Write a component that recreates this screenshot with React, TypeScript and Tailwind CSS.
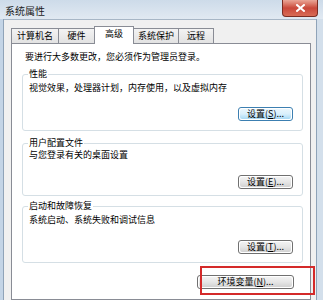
import React from "react";

const FONT = { fontFamily: '"Noto Sans CJK SC", "Noto Sans", sans-serif' };

function Btn({ label, k, w, def }: { label: string; k: string; w: string; def?: boolean }) {
  return (
    <div
      className={`${w} h-[14px] rounded-[3px] border ${
        def ? "border-[#3c7fb1]" : "border-[#707070]"
      } p-px bg-white flex`}
    >
      <div
        className={`flex-1 rounded-[2px] flex items-center justify-center text-[9px] leading-[10px] text-black ${
          def
            ? "bg-gradient-to-b from-[#eaf6fd] via-[#d9f0fc] to-[#a7d9f5]"
            : "bg-gradient-to-b from-[#f2f2f2] via-[#e6e6e6] to-[#d2d2d2]"
        }`}
      >
        <span>
          {label}(<span className="underline">{k}</span>)...
        </span>
      </div>
    </div>
  );
}

function Group({
  title,
  desc,
  k,
  def,
  mt,
  pt,
  bmt,
  pb,
}: {
  title: string;
  desc: string;
  k: string;
  def?: boolean;
  mt: string;
  pt: string;
  bmt: string;
  pb: string;
}) {
  return (
    <fieldset
      className={`${mt} ${pt} ${pb} border border-[#d5dfe5] rounded-[3px] pl-[6px] pr-[9px] flex flex-col`}
    >
      <legend className="px-[1px] -ml-[1px] text-[9px] leading-[12px] text-black">{title}</legend>
      <div className="text-[9px] leading-[12px] text-black">{desc}</div>
      <div className={`${bmt} flex justify-end`}>
        <Btn label="设置" k={k} w="w-[55px]" def={def} />
      </div>
    </fieldset>
  );
}

function Tab({ label, w, sel }: { label: string; w: string; sel?: boolean }) {
  if (sel)
    return (
      <div
        className={`${w} h-[18px] -mb-px -ml-px relative z-10 bg-white border-t border-l border-r border-[#898c95] flex items-start justify-center pt-[1px] text-[9px] leading-[12px] text-black`}
      >
        {label}
      </div>
    );
  return (
    <div
      className={`${w} h-[15px] -ml-px first:ml-0 bg-gradient-to-b from-[#f3f3f3] to-[#e2e2e2] border-t border-l border-r border-[#898c95] flex items-center justify-center text-[9px] leading-[12px] text-black`}
    >
      {label}
    </div>
  );
}

export default function App() {
  return (
    <div className="w-[323px] h-[300px] overflow-hidden relative flex flex-col bg-[#d6e2ee]" style={FONT}>
      {/* title bar */}
      <div className="h-[19px] shrink-0 flex bg-gradient-to-b from-[#cddbe9] to-[#e1e9f2]">
        <span className="ml-[5px] mt-[5px] text-[10px] leading-[12px] text-[#1b1b1b]">系统属性</span>
        <div className="ml-auto mr-[5px] w-[36px] h-[17px] rounded-b-[4px] border border-t-0 border-[#7a2c22] bg-gradient-to-b from-[#e9a596] via-[#c9473a] to-[#d86b55] flex items-center justify-center">
          <svg width="9" height="8" viewBox="0 0 9 8">
            <path d="M1 1 L8 7 M8 1 L1 7" stroke="#fff" strokeWidth="2" strokeLinecap="square" />
          </svg>
        </div>
      </div>
      {/* body */}
      <div className="flex-1 flex">
        <div className="w-[4px] shrink-0 bg-[#c3d4e6] border-r border-[#8fa3b8]" />
        <div className="flex-1 bg-[#f0f0f0] border-t border-[#a7b6c6] pl-[7px] pr-[5px] pt-[6px] flex flex-col">
          {/* tabs */}
          <div className="flex items-end h-[17px] shrink-0">
            <Tab label="计算机名" w="w-[48px]" />
            <Tab label="硬件" w="w-[37px]" />
            <Tab label="高级" w="w-[40px]" sel />
            <Tab label="系统保护" w="w-[46px]" />
            <Tab label="远程" w="w-[36px]" />
          </div>
          {/* panel */}
          <div className="flex-1 bg-white border border-[#898c95] pt-[7px] pl-[10px] pr-[7px] flex flex-col">
            <div className="ml-[3px] text-[9px] leading-[12px] text-black">
              要进行大多数更改，您必须作为管理员登录。
            </div>
            <Group
              title="性能"
              desc="视觉效果，处理器计划，内存使用，以及虚拟内存"
              k="S"
              def
              mt="mt-[5px]"
              pt="pt-[2px]"
              bmt="mt-[13px]"
              pb="pb-[9px]"
            />
            <Group
              title="用户配置文件"
              desc="与您登录有关的桌面设置"
              k="E"
              mt="mt-[6px]"
              pt="pt-[0px]"
              bmt="mt-[14px]"
              pb="pb-[6px]"
            />
            <Group
              title="启动和故障恢复"
              desc="系统启动、系统失败和调试信息"
              k="T"
              mt="mt-[4px]"
              pt="pt-[2px]"
              bmt="mt-[14px]"
              pb="pb-[8px]"
            />
            <div className="mt-[12px] mr-[9px] flex justify-end">
              <Btn label="环境变量" k="N" w="w-[97px]" />
            </div>
          </div>
        </div>
        <div className="w-[7px] shrink-0 bg-[#d3dfeb] border-l border-[#8fa3b8]" />
      </div>
      {/* red annotation */}
      <div className="absolute left-[200px] top-[266px] w-[115px] h-[29px] border-2 border-[#d42a2a]" />
    </div>
  );
}
